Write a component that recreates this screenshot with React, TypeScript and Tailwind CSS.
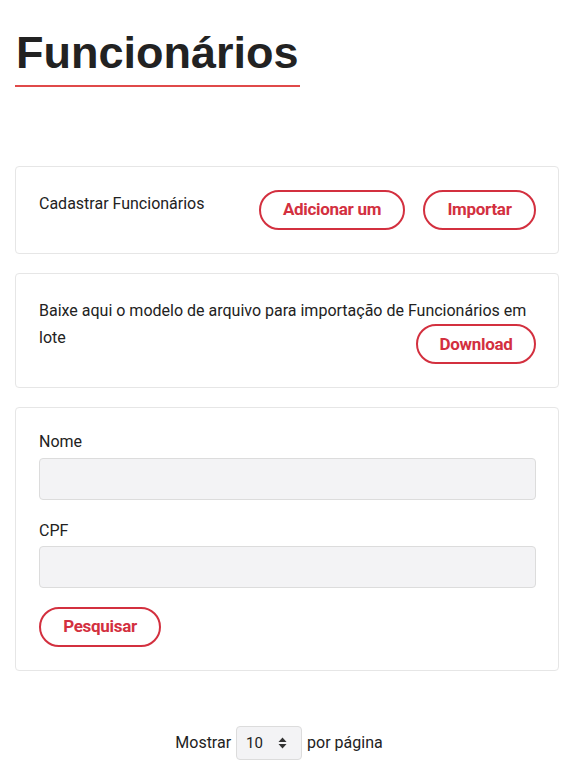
import React from "react";

function Btn({ children, className = "" }: { children: React.ReactNode; className?: string }) {
  return (
    <button
      className={`h-10 rounded-full border-2 border-[#d3303f] bg-white text-[#d3303f] font-bold text-[17px] tracking-[-0.3px] ${className}`}
      style={{ fontFamily: "Roboto, sans-serif" }}
    >
      {children}
    </button>
  );
}

export default function App() {
  return (
    <div className="min-h-[768px] bg-white text-[#222]" style={{ fontFamily: "Roboto, sans-serif" }}>
      <div className="pl-[15px] pr-[17px] pt-[28px]">
        <div className="inline-block">
          <h1
            className="text-[45px] font-bold leading-[50px] text-[#222] px-[1px]"
            style={{ fontFamily: "'Liberation Sans', Arial, sans-serif" }}
          >
            Funcionários
          </h1>
          <div className="mt-[7px] h-[2px] bg-[#e04a4a]" />
        </div>

        <div className="mt-[79px] flex flex-col gap-[19px]">
          <div className="flex items-start rounded border border-[#e6e6e6] bg-white pl-[23px] pr-[22px] pt-[23px] pb-[23px] h-[88px]">
            <div className="text-[16px] leading-[26px] pt-[1px] flex-1">Cadastrar Funcionários</div>
            <div className="flex gap-[18px]">
              <Btn className="w-[146px]">Adicionar um</Btn>
              <Btn className="w-[113px]">Importar</Btn>
            </div>
          </div>

          <div className="rounded border border-[#e6e6e6] bg-white pl-[23px] pr-[22px] pt-[23px] pb-[22px] h-[115px]">
            <div className="text-[16px] leading-[27px] relative">
              Baixe aqui o modelo de arquivo para importação de Funcionários em
              <br />
              lote
              <div className="absolute right-0 top-[27px]">
                <Btn className="w-[120px]">Download</Btn>
              </div>
            </div>
          </div>

          <div className="rounded border border-[#e6e6e6] bg-white pl-[23px] pr-[22px] pt-[22px] pb-[22px] h-[264px]">
            <label className="block text-[16px] leading-[24px]">Nome</label>
            <div className="mt-[4px] h-[42px] rounded border border-[#dcdcdc] bg-[#f3f3f5]" />
            <label className="block mt-[19px] text-[16px] leading-[24px]">CPF</label>
            <div className="mt-[3px] h-[42px] rounded border border-[#dcdcdc] bg-[#f3f3f5]" />
            <div className="mt-[19px]">
              <Btn className="w-[122px]">Pesquisar</Btn>
            </div>
          </div>
        </div>

        <div className="mt-[55px] flex items-center justify-center gap-[5px] pr-[16px] text-[16px]">
          <span>Mostrar</span>
          <div className="flex h-[34px] w-[66px] items-center justify-between rounded border border-[#dcdcdc] bg-[#f3f3f5] pl-[9px] pr-[14px]">
            <span className="text-[15px]">10</span>
            <svg width="9" height="12" viewBox="0 0 9 12">
              <path d="M4.5 0.5 L8.5 5 H0.5 Z" fill="#333" />
              <path d="M4.5 11.5 L8.5 7 H0.5 Z" fill="#333" />
            </svg>
          </div>
          <span>por página</span>
        </div>
      </div>
    </div>
  );
}
